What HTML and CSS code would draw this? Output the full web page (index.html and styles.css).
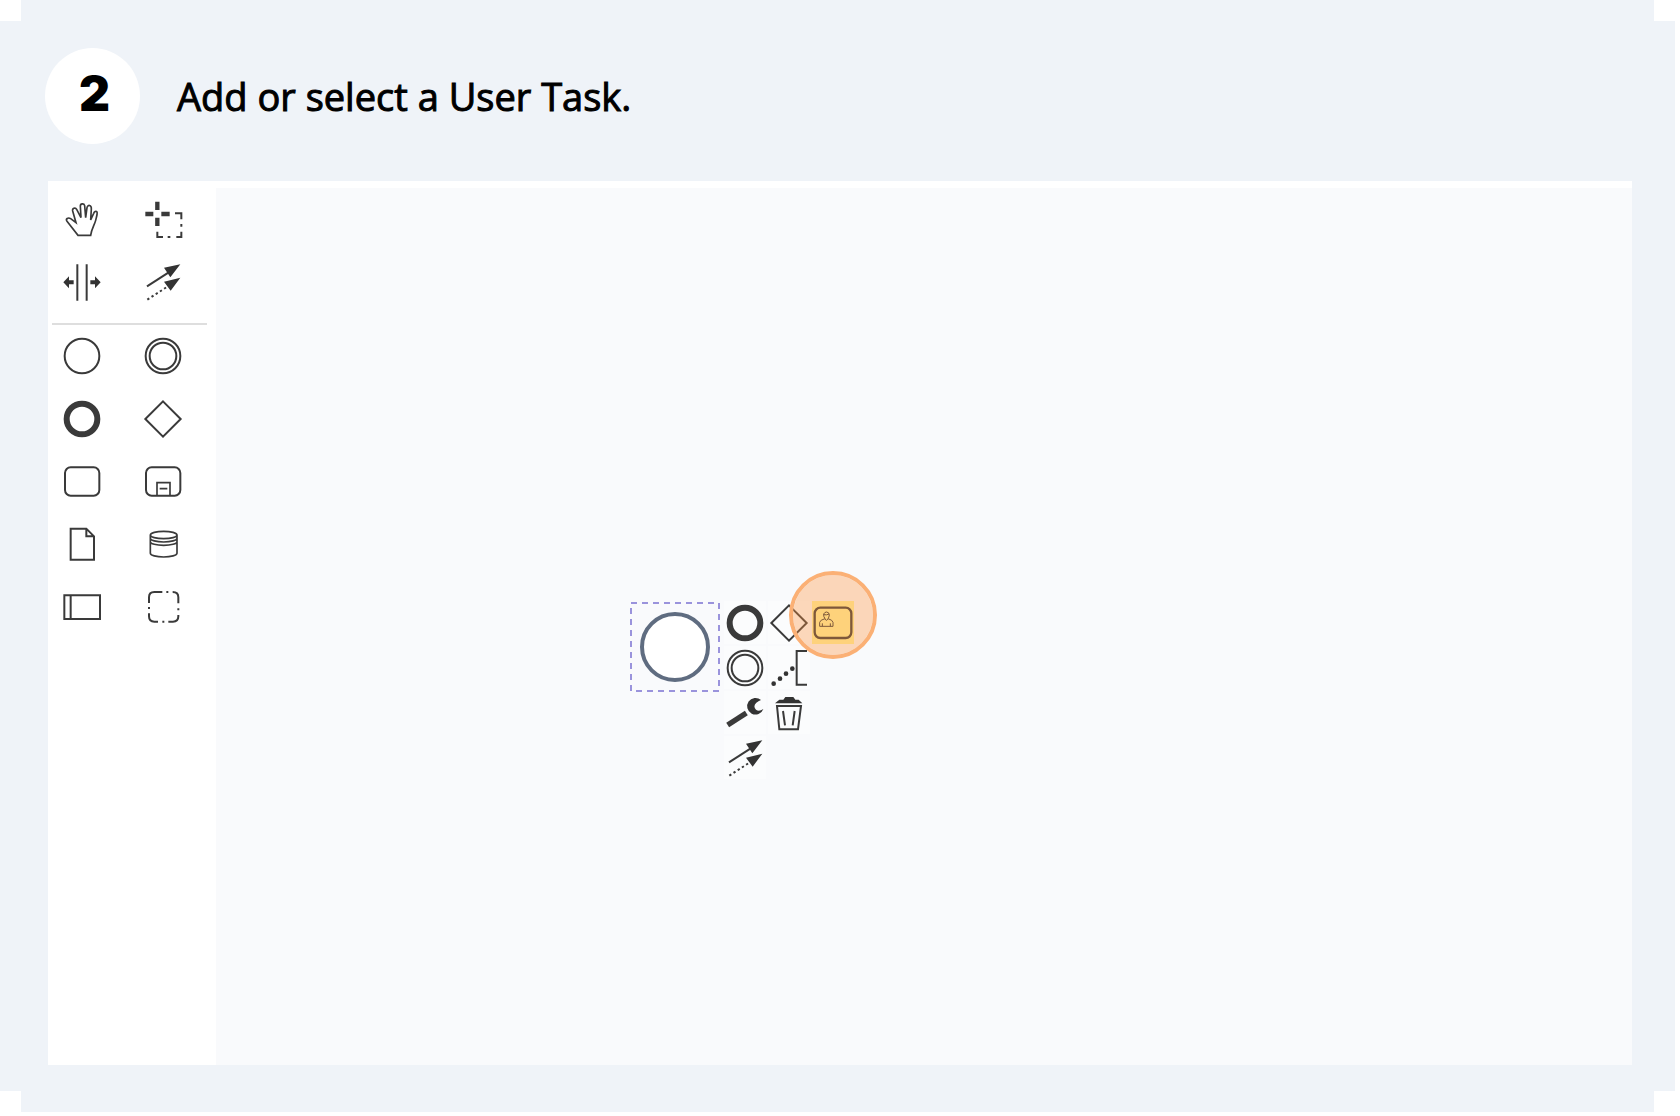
FILE: index.html
```html
<!DOCTYPE html>
<html lang="en">
<head>
<meta charset="utf-8">
<meta name="viewport" content="width=device-width, initial-scale=1">
<title>Add or select a User Task</title>
<link rel="stylesheet" href="styles.css">
</head>
<body>
<svg class="defs" aria-hidden="true">
  <defs>
    <g id="i-hand"><path class="thin" d="M60 121H98C100 103 110 88 113 76C116 63 119 55 117 51C114 47 109 50 107 55L98 75L100 42C101 29 89 28 87 38L83 68L80 32C78 24 67 25 67 33L69 68L56 43C52 36 42 40 44 48L54 83L38 71C30 66 22 72 27 79Z"/></g>
    <g id="i-lasso"><path class="fat" d="M19 57H43M67 57H92M55 20V45M55 68V93"/><path class="line" d="M108 55H127V73M127 87V95M127 110V126H112M94 126H86M72 126H55V110"/></g>
    <g id="i-space"><path class="line" d="M58 19V128M86 19V128"/><path class="solid" d="M16 73L33 55V67H47V79H33V91ZM128 73L111 55V67H97V79H111V91Z"/></g>
    <g id="i-connect"><path class="line" d="M24 85L88 44"/><path class="line dots" d="M25 125L82 88"/><path class="solid" d="M124 19L75 29L94 58ZM124 59L75 71L95 98Z"/></g>
    <g id="i-start"><circle class="line" cx="72" cy="72" r="52"/></g>
    <g id="i-intermediate"><circle class="line" cx="72" cy="72" r="52"/><circle class="line" cx="72" cy="72" r="40"/></g>
    <g id="i-end"><circle class="ring" cx="72" cy="72" r="46"/></g>
    <g id="i-gateway"><path class="line" d="M72 19L125 72L72 125L19 72Z"/></g>
    <g id="i-task"><rect class="line" x="21" y="28" width="103" height="85" rx="17"/></g>
    <g id="i-subprocess"><rect class="line" x="21" y="28" width="103" height="85" rx="17"/><path class="thin" d="M54 112V74H93V112M62 92H85"/></g>
    <g id="i-data"><path class="line" d="M38 23H85L108 46V116H38ZM85 23V46H108"/></g>
    <g id="i-store"><path class="thin" d="M34 42A40 11 0 0 1 114 42V97A40 11 0 0 1 34 97ZM34 42A40 11 0 0 0 114 42M34 52A40 11 0 0 0 114 52M34 62A40 11 0 0 0 114 62"/></g>
    <g id="i-pool"><path class="line" d="M19 34H126V105H19ZM38 34V105"/></g>
    <g id="i-group"><path class="line" d="M30 57V40Q30 24 46 24H70M82 24H88M101 24Q118 24 118 40V58M118 73V79M118 93V97Q118 113 102 113H88M76 113H70M57 113H46Q30 113 30 97V88M30 75V69"/></g>
    <g id="i-annotation"><path class="line" d="M126 21H95V122H126"/><g class="solid"><circle cx="26" cy="119" r="7"/><circle cx="45" cy="104" r="7"/><circle cx="63" cy="89" r="7"/><circle cx="82" cy="74" r="7"/></g></g>
    <g id="i-wrench"><path class="handle" d="M20 108L76 72"/><path class="solid" d="M120 33A25 25 0 1 0 127 60Q114 69 105 62Q95 51 106 41Q112 37 120 33Z"/></g>
    <g id="i-trash"><path class="solid" d="M30 43L43 32H55L61 24H85L91 32H101L112 43Z"/><path class="line" d="M36 51H108L99 121H43ZM54 66L60 109M89 66L83 109"/></g>
    <g id="i-user"><rect class="bold" x="17" y="26" width="110" height="91" rx="17"/><path class="hair" d="M48 59Q43 53 44 45Q47 39 53 39Q61 40 61 48Q60 55 57 59Q71 63 72 70V82H32V70Q33 63 48 59ZM48 59Q52 69 57 59M40 82V73M64 82V73M44 47Q53 49 60 45"/></g>
  </defs>
</svg>

<main class="step">
  <header class="step-header">
    <span class="badge">2</span>
    <h1 class="title">Add or select a User Task.</h1>
  </header>

  <section class="modeler">
    <nav class="palette" aria-label="Palette">
      <div class="tools">
        <button class="tool" aria-label="Hand tool"><svg viewBox="0 0 144 144"><use href="#i-hand"/></svg></button>
        <button class="tool" aria-label="Lasso tool"><svg viewBox="0 0 144 144"><use href="#i-lasso"/></svg></button>
        <button class="tool" aria-label="Space tool"><svg viewBox="0 0 144 144"><use href="#i-space"/></svg></button>
        <button class="tool" aria-label="Connect tool"><svg viewBox="0 0 144 144"><use href="#i-connect"/></svg></button>
      </div>
      <hr class="separator">
      <div class="tools">
        <button class="tool" aria-label="Start event"><svg viewBox="0 0 144 144"><use href="#i-start"/></svg></button>
        <button class="tool" aria-label="Intermediate event"><svg viewBox="0 0 144 144"><use href="#i-intermediate"/></svg></button>
        <button class="tool" aria-label="End event"><svg viewBox="0 0 144 144"><use href="#i-end"/></svg></button>
        <button class="tool" aria-label="Gateway"><svg viewBox="0 0 144 144"><use href="#i-gateway"/></svg></button>
        <button class="tool" aria-label="Task"><svg viewBox="0 0 144 144"><use href="#i-task"/></svg></button>
        <button class="tool" aria-label="Sub-process"><svg viewBox="0 0 144 144"><use href="#i-subprocess"/></svg></button>
        <button class="tool" aria-label="Data object"><svg viewBox="0 0 144 144"><use href="#i-data"/></svg></button>
        <button class="tool" aria-label="Data store"><svg viewBox="0 0 144 144"><use href="#i-store"/></svg></button>
        <button class="tool" aria-label="Pool"><svg viewBox="0 0 144 144"><use href="#i-pool"/></svg></button>
        <button class="tool" aria-label="Group"><svg viewBox="0 0 144 144"><use href="#i-group"/></svg></button>
      </div>
    </nav>

    <div class="canvas">
      <svg class="node" viewBox="0 0 90 90" role="img" aria-label="Selected start event">
        <rect class="outline" x="1" y="1" width="88" height="88"/>
        <circle class="event" cx="45" cy="45" r="33"/>
      </svg>
      <div class="pad">
        <button class="action" aria-label="Append end event"><svg viewBox="9 9 126 126"><use href="#i-end"/></svg></button>
        <button class="action" aria-label="Append gateway"><svg viewBox="9 9 126 126"><use href="#i-gateway"/></svg></button>
        <button class="action active" aria-label="Append user task"><svg viewBox="9 9 126 126"><use href="#i-user"/></svg></button>
        <button class="action first" aria-label="Append intermediate event"><svg viewBox="9 9 126 126"><use href="#i-intermediate"/></svg></button>
        <button class="action" aria-label="Add text annotation"><svg viewBox="9 9 126 126"><use href="#i-annotation"/></svg></button>
        <button class="action first" aria-label="Change element"><svg viewBox="9 9 126 126"><use href="#i-wrench"/></svg></button>
        <button class="action" aria-label="Delete"><svg viewBox="9 9 126 126"><use href="#i-trash"/></svg></button>
        <button class="action first" aria-label="Connect"><svg viewBox="9 9 126 126"><use href="#i-connect"/></svg></button>
      </div>
      <span class="click-marker"></span>
    </div>
  </section>
</main>
</body>
</html>
```
FILE: styles.css
```css
* {
  box-sizing: border-box;
}

body {
  margin: 0;
  background: #fff;
  color: #000;
  font-family: "Open Sans", "Noto Sans", sans-serif;
}

button {
  display: grid;
  place-items: center;
  padding: 0;
  border: 0;
  background: none;
}

.defs {
  position: absolute;
  width: 0;
  height: 0;
}

/* Panel with square notches cut out of its corners */
.step {
  margin: 0 5px 4px 0;
  padding: 48px 43px 47px 48px;
  background:
    linear-gradient(#eff3f8, #eff3f8) center / calc(100% - 42px) 100% no-repeat,
    linear-gradient(#eff3f8, #eff3f8) center / 100% calc(100% - 42px) no-repeat;
}

.step-header {
  display: flex;
  align-items: center;
  gap: 37px;
  margin: 0 0 37px -3px;
}

.badge {
  flex: none;
  width: 95px;
  height: 96px;
  padding-left: 4px;
  border-radius: 50%;
  background: #fff;
  font: 900 48px/92px Inter, sans-serif;
  text-align: center;
}

.title {
  margin: 0;
  font-size: 38px;
  font-weight: 500;
  line-height: 96px;
  -webkit-text-stroke: 1px #000;
}

.modeler {
  display: flex;
  aspect-ratio: 396 / 221;
  background: #fff;
}

.palette {
  flex: none;
  width: 168px;
  padding-top: 6px;
}

.tools {
  display: grid;
  grid-template-columns: 68px 68px;
  grid-auto-rows: 63px;
  column-gap: 13px;
}

.separator {
  height: 2px;
  margin: 10px 9px -1px 4px;
  border: 0;
  background: #dedede;
}

.tool svg {
  width: 48px;
  height: 48px;
}

.canvas {
  position: relative;
  flex: 1;
  margin-top: 7px;
  background: #f9fafc;
}

/* Diagram items placed on the free canvas */
.node {
  position: absolute;
  left: 414px;
  top: 414px;
  width: 90px;
  height: 90px;
}

.pad {
  position: absolute;
  left: 508px;
  top: 413px;
  display: grid;
  grid-template-columns: repeat(3, 42px);
  grid-auto-rows: 43px;
  gap: 2px;
}

.action {
  background: #fbfcfd;
}

.action svg {
  width: 42px;
  height: 42px;
}

.first {
  grid-column: 1;
}

.active {
  background: radial-gradient(closest-side, #fef59d 94%, #fef59d00) center / 150% 150%;
}

.click-marker {
  position: absolute;
  left: 573px;
  top: 383px;
  width: 88px;
  height: 88px;
  border: 4px solid #fbb075;
  border-radius: 50%;
  background: rgba(255, 145, 60, 0.35);
  background-clip: padding-box;
}

/* Icon strokes */
.line,
.thin,
.bold,
.hair,
.ring,
.fat,
.handle {
  fill: none;
  stroke: #3a3a3a;
  stroke-width: 6;
}

.thin {
  stroke-width: 5;
}

.bold {
  stroke-width: 7;
}

.hair {
  stroke-width: 3;
}

.ring {
  stroke-width: 18;
}

.fat {
  stroke-width: 13;
}

.handle {
  stroke-width: 16;
}

.dots {
  stroke-dasharray: 7 8;
}

.solid {
  fill: #333;
}

.outline {
  fill: none;
  stroke: #9a93dc;
  stroke-width: 2;
  stroke-dasharray: 6 5;
}

.event {
  fill: #fff;
  stroke: #5f6c80;
  stroke-width: 4;
}
```
